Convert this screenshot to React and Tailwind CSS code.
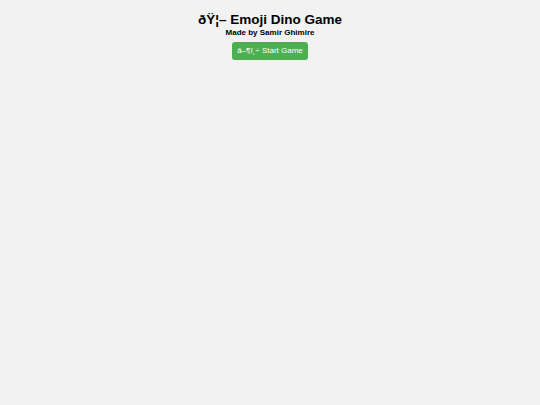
import React from "react";

export default function App() {
  return (
    <div className="min-h-screen bg-[#f2f2f2] text-center text-black" style={{ fontFamily: '"Liberation Sans", Arial, sans-serif' }}>
      <div className="pt-[12px] flex flex-col items-center">
        <h1 className="text-[13.5px] font-bold leading-[16px]">ðŸ¦– Emoji Dino Game</h1>
        <p className="text-[8px] font-bold leading-[10px]">Made by Samir Ghimire</p>
        <button className="mt-[4px] h-[18px] px-[5px] rounded-[3px] bg-[#4caf50] text-white text-[8px] leading-[18px]">
          â–¶ï¸÷ Start Game
        </button>
      </div>
    </div>
  );
}
